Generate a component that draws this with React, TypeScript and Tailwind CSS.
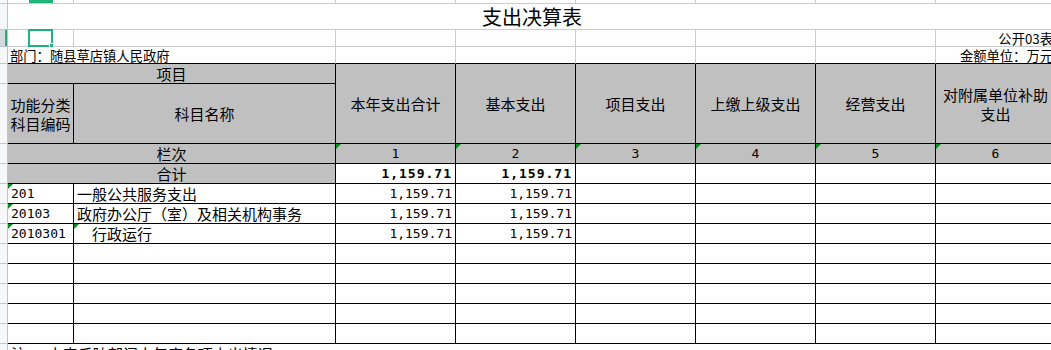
import React from "react";

const cjk = "font-['Noto_Sans_CJK_SC',sans-serif]";
const mono = "font-['DejaVu_Sans_Mono',monospace]";

const light = "border-r border-b border-[#c8cbd4]";
const black = "border-r border-b border-black";

function Tri() {
  return (
    <span className="absolute left-0 top-0 h-0 w-0 border-t-[5px] border-r-[5px] border-t-[#0f8a1c] border-r-transparent" />
  );
}

function Gutter({ selected = false }: { selected?: boolean }) {
  return (
    <div
      className={
        "relative border-r border-b border-[#bfc3cc] " +
        (selected ? "bg-[#d6d9e0]" : "bg-[#f7f8fa]")
      }
    >
      {selected && <span className="absolute right-0 top-0 h-full w-[2px] bg-[#1fb37a]" />}
    </div>
  );
}

const headers = ["本年支出合计", "基本支出", "项目支出", "上缴上级支出", "经营支出"];

const dataRows = [
  { code: "201", name: "一般公共服务支出", indent: false, nameTri: false },
  { code: "20103", name: "政府办公厅（室）及相关机构事务", indent: false, nameTri: false },
  { code: "2010301", name: "行政运行", indent: true, nameTri: true },
];

export default function App() {
  return (
    <div className={"w-[1051px] h-[350px] overflow-hidden bg-white text-black " + cjk}>
      <div className="grid grid-cols-[8px_66px_262px_120px_120px_120px_120px_120px_120px] grid-rows-[4px_26px_17px_17px_20px_60px_20px_20px_20px_20px_20px_20px_20px_20px_20px_20px_20px] w-[1055px]">
        {/* Row 0 */}
        <Gutter />
        <div className={"relative " + light}>
          <span className="absolute left-[21px] top-0 h-[3px] w-[24px] bg-[#1fb37a]" />
        </div>
        {Array.from({ length: 7 }).map((_, i) => (
          <div key={"r0" + i} className={light} />
        ))}

        {/* Row 1: title */}
        <Gutter />
        <div className="col-span-8 flex items-end justify-center border-b border-[#c8cbd4] pb-[1px]">
          <span className="text-[20px] leading-[22px] tracking-[0px]">支出决算表</span>
        </div>

        {/* Row 2 */}
        <Gutter selected />
        <div className={"relative " + light}>
          <span className="absolute left-[20px] top-[-1px] h-[18px] w-[25px] border-2 border-[#1fb37a]" />
          <span className="absolute left-[41px] top-[13px] h-[5px] w-[5px] bg-[#1fb37a] border border-white" />
        </div>
        {Array.from({ length: 6 }).map((_, i) => (
          <div key={"r2" + i} className={light} />
        ))}
        <div className={"flex items-end justify-end pr-[2px] whitespace-nowrap " + light}>
          <span className="text-[13.3px] leading-[15px]">公开03表</span>
        </div>

        {/* Row 3 */}
        <Gutter />
        <div className="col-span-2 flex items-end pl-[2px] border-r border-b border-r-[#c8cbd4] border-b-black">
          <span className="text-[13.3px] leading-[15px] whitespace-nowrap">部门：随县草店镇人民政府</span>
        </div>
        {Array.from({ length: 5 }).map((_, i) => (
          <div key={"r3" + i} className="border-r border-b border-r-[#c8cbd4] border-b-black" />
        ))}
        <div className="flex items-end justify-end pr-[2px] whitespace-nowrap border-r border-b border-r-[#c8cbd4] border-b-black">
          <span className="text-[13.3px] leading-[15px]">金额单位：万元</span>
        </div>

        {/* Row 4 */}
        <Gutter />
        <div className={"col-span-2 flex items-center justify-center bg-[#c0c0c0] text-[15px] leading-[18px] " + black}>
          项目
        </div>
        {headers.map((h) => (
          <div
            key={h}
            className={"row-span-2 flex items-center justify-center bg-[#c0c0c0] text-[15px] leading-[19px] " + black}
          >
            {h}
          </div>
        ))}
        <div className={"row-span-2 flex flex-col items-center justify-center bg-[#c0c0c0] text-[15px] leading-[19px] " + black}>
          <span>对附属单位补助</span>
          <span>支出</span>
        </div>

        {/* Row 5 */}
        <Gutter />
        <div className={"flex flex-col items-center justify-center bg-[#c0c0c0] text-[15px] leading-[19px] " + black}>
          <span>功能分类</span>
          <span>科目编码</span>
        </div>
        <div className={"flex items-center justify-center bg-[#c0c0c0] text-[15px] leading-[18px] " + black}>
          科目名称
        </div>

        {/* Row 6: 栏次 */}
        <Gutter />
        <div className={"col-span-2 flex items-center justify-center bg-[#c0c0c0] text-[15px] leading-[18px] " + black}>
          栏次
        </div>
        {["1", "2", "3", "4", "5", "6"].map((n) => (
          <div
            key={"lc" + n}
            className={"relative flex items-center justify-center bg-[#c0c0c0] text-[13px] leading-[16px] " + mono + " " + black}
          >
            <Tri />
            {n}
          </div>
        ))}

        {/* Row 7: 合计 */}
        <Gutter />
        <div className={"col-span-2 flex items-center justify-center bg-[#c0c0c0] text-[15px] leading-[18px] " + black}>
          合计
        </div>
        {["1,159.71", "1,159.71"].map((v, i) => (
          <div
            key={"tot" + i}
            className={"flex items-center justify-end pr-[3px] font-bold text-[13px] leading-[16px] tracking-[1px] " + mono + " " + black}
          >
            {v}
          </div>
        ))}
        {Array.from({ length: 4 }).map((_, i) => (
          <div key={"tote" + i} className={black} />
        ))}

        {/* Data rows */}
        {dataRows.map((r) => (
          <React.Fragment key={r.code}>
            <Gutter />
            <div className={"relative flex items-center pl-[3px] text-[13px] leading-[16px] " + mono + " " + black}>
              <Tri />
              {r.code}
            </div>
            <div className={"relative flex items-center whitespace-nowrap text-[15px] leading-[18px] " + (r.indent ? "pl-[18px] " : "pl-[3px] ") + black}>
              {r.nameTri && <Tri />}
              {r.name}
            </div>
            <div className={"flex items-center justify-end pr-[3px] text-[13px] leading-[16px] " + mono + " " + black}>
              1,159.71
            </div>
            <div className={"flex items-center justify-end pr-[3px] text-[13px] leading-[16px] " + mono + " " + black}>
              1,159.71
            </div>
            {Array.from({ length: 4 }).map((_, i) => (
              <div key={r.code + "e" + i} className={black} />
            ))}
          </React.Fragment>
        ))}

        {/* Empty rows */}
        {Array.from({ length: 5 }).map((_, ri) => (
          <React.Fragment key={"empty" + ri}>
            <Gutter />
            {Array.from({ length: 8 }).map((_, ci) => (
              <div key={"ec" + ri + "-" + ci} className={black} />
            ))}
          </React.Fragment>
        ))}

        {/* Note row */}
        <Gutter />
        <div className="col-span-8 flex items-start pl-[3px] pt-[1px] whitespace-pre text-[15px] leading-[18px]">
          注：  本表反映部门本年度各项支出情况
        </div>
      </div>
    </div>
  );
}
